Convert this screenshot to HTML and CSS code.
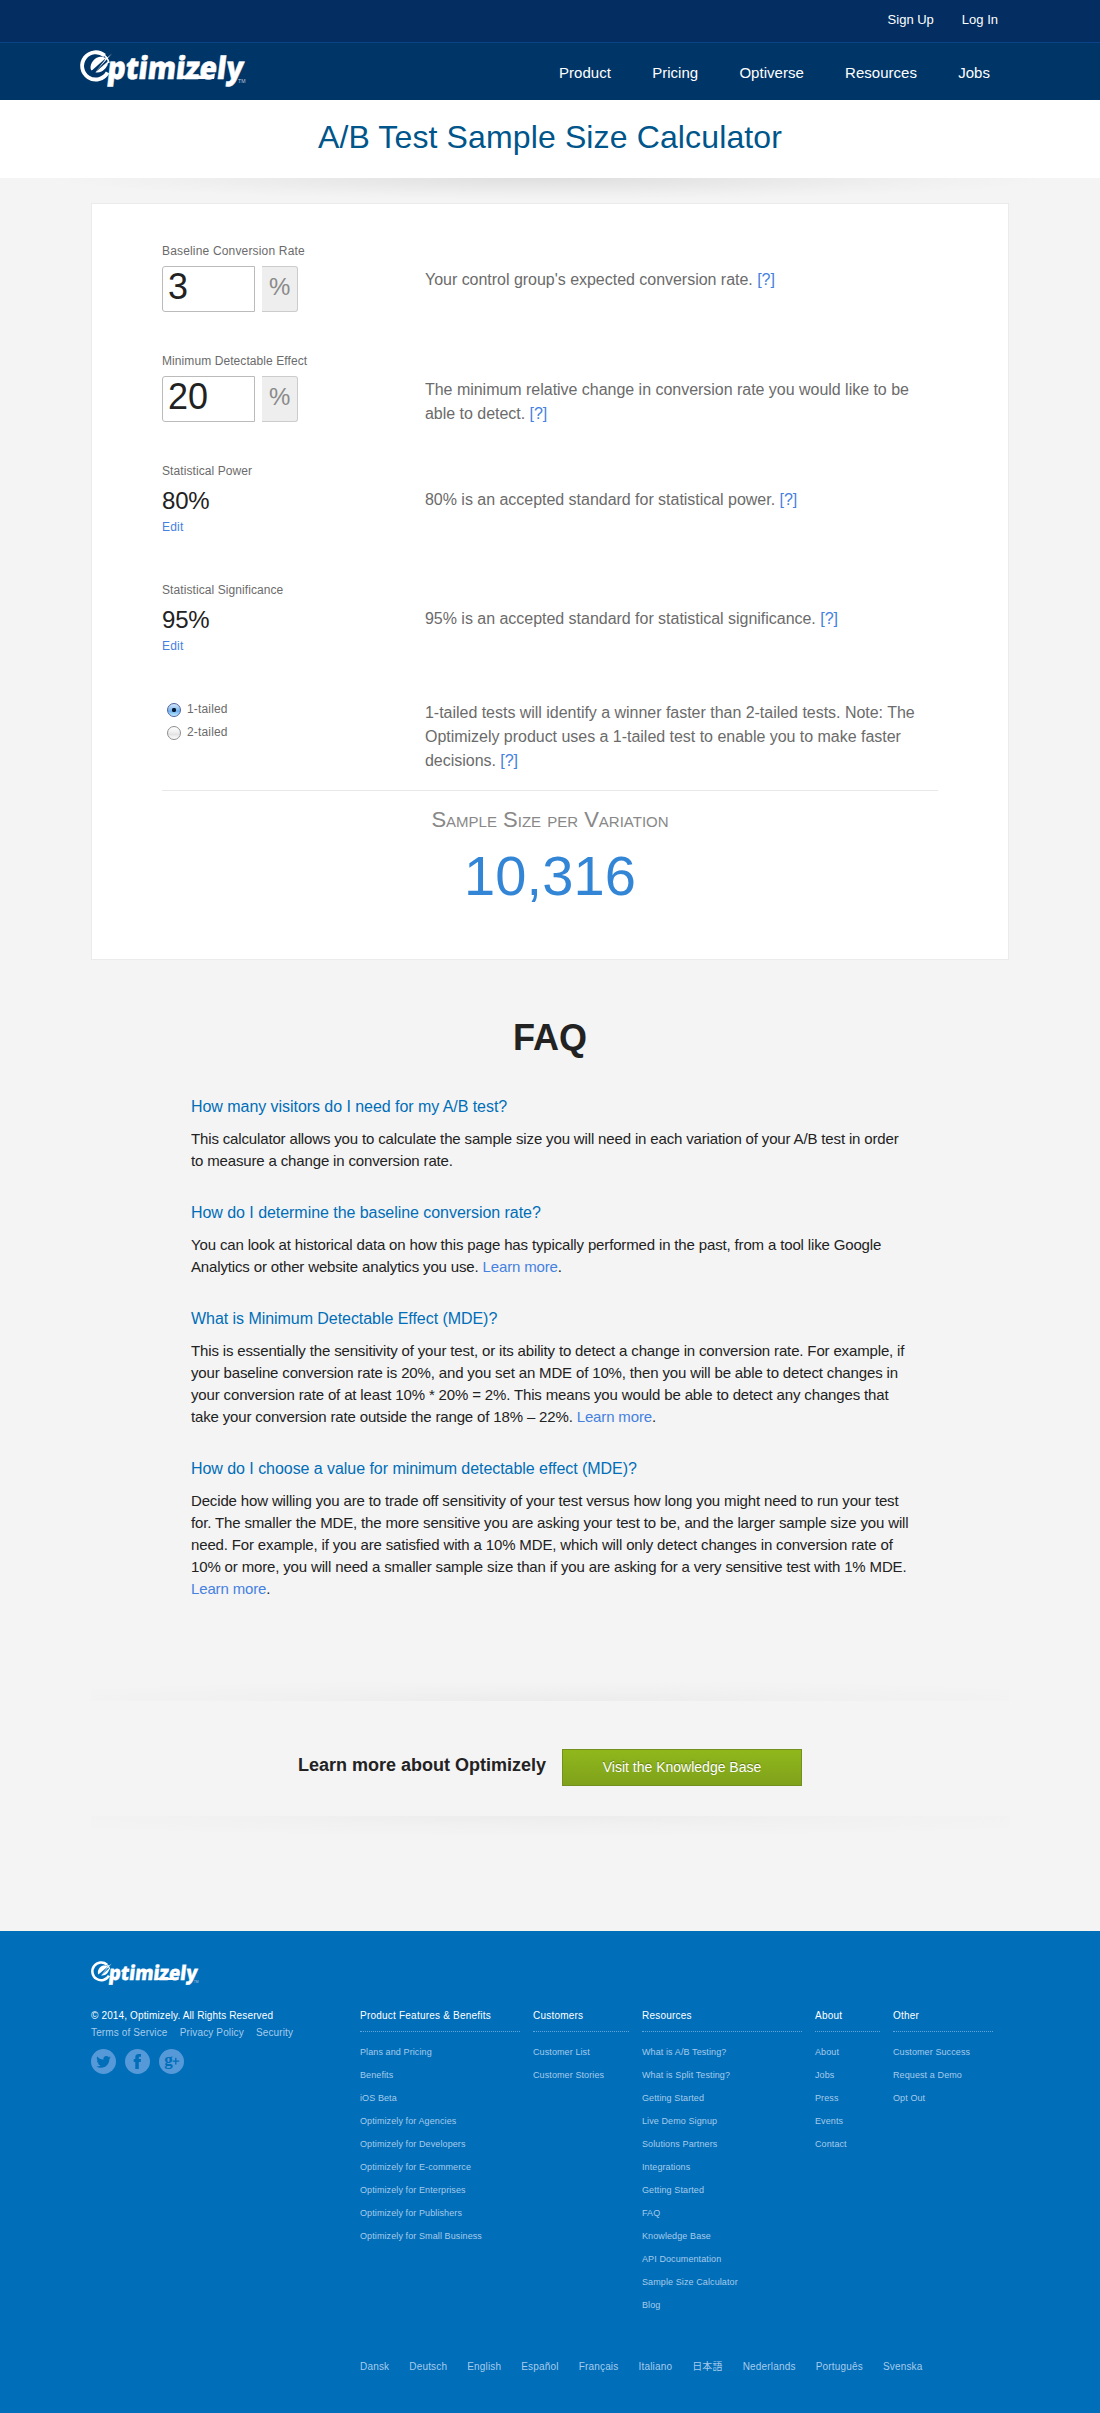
FILE: index.html
```
<!DOCTYPE html>
<html lang="en">
<head>
<meta charset="utf-8">
<title>A/B Test Sample Size Calculator</title>
<link rel="stylesheet" href="styles.css">
</head>
<body>
<header>
  <div class="topbar">
    <nav class="account"><a>Sign Up</a><a>Log In</a></nav>
  </div>
  <div class="mainbar">
    <svg class="logo" viewBox="0 0 166 36">
      <path d="M24.6 5.6A13.6 13.6 0 1 0 27.6 22.5" fill="none" stroke="#fff" stroke-width="3.9"/>
      <path d="M22 3.6A14 14 0 0 1 29 13" fill="none" stroke="#fff" stroke-width="1.6"/>
      <path d="M11.2 20.6C8.8 15.4 13 8.6 18.8 7C22 6.2 24.6 7 25.4 8.6L13.2 19.2Z" fill="#fff"/>
      <path d="M15.6 21.8L32 3.6L27.4 7.4L26 6.2L24.6 10.2Z" fill="#fff"/>
      <path d="M15.4 22.2L28 11.2C28.6 17 22 23.6 15.4 22.2Z" fill="#fff"/>
      <text transform="translate(26.4 28.6) skewX(-7)" class="logo-word" textLength="136" lengthAdjust="spacingAndGlyphs">ptimizely</text>
      <path d="M99 25.6H134V29H98.5Z" fill="#fff"/>
      <text x="158" y="33" class="logo-tm" textLength="7.5" lengthAdjust="spacingAndGlyphs">TM</text>
    </svg>
    <nav class="menu"><a>Product</a><a>Pricing</a><a>Optiverse</a><a>Resources</a><a>Jobs</a></nav>
  </div>
</header>

<div class="title"><h1>A/B Test Sample Size Calculator</h1></div>
<div class="title-shadow"></div>

<main>
  <form class="card">
    <div class="row">
      <div class="field">
        <label class="loose">Baseline Conversion Rate</label>
        <div class="percent"><input type="text" value="3"><span>%</span></div>
      </div>
      <p>Your control group's expected conversion rate. <a>[?]</a></p>
    </div>
    <div class="row">
      <div class="field">
        <label>Minimum Detectable Effect</label>
        <div class="percent"><input type="text" value="20"><span>%</span></div>
      </div>
      <p>The minimum relative change in conversion rate you would like to be able to detect. <a>[?]</a></p>
    </div>
    <div class="row tall">
      <div class="field">
        <label>Statistical Power</label>
        <div class="value">80%</div>
        <a class="edit">Edit</a>
      </div>
      <p>80% is an accepted standard for statistical power. <a>[?]</a></p>
    </div>
    <div class="row tall">
      <div class="field">
        <label>Statistical Significance</label>
        <div class="value">95%</div>
        <a class="edit">Edit</a>
      </div>
      <p>95% is an accepted standard for statistical significance. <a>[?]</a></p>
    </div>
    <div class="row tails">
      <div class="field radios">
        <label><input type="radio" name="tails" checked>1-tailed</label>
        <label><input type="radio" name="tails">2-tailed</label>
      </div>
      <p>1-tailed tests will identify a winner faster than 2-tailed tests. Note: The Optimizely product uses a 1-tailed test to enable you to make faster decisions. <a>[?]</a></p>
    </div>
    <div class="result">
      <div class="result-label">Sample Size per Variation</div>
      <div class="result-value">10,316</div>
    </div>
  </form>

  <section class="faq">
    <h2>FAQ</h2>
    <h3>How many visitors do I need for my A/B test?</h3>
    <p>This calculator allows you to calculate the sample size you will need in each variation of your A/B test in order<br>to measure a change in conversion rate.</p>
    <h3>How do I determine the baseline conversion rate?</h3>
    <p>You can look at historical data on how this page has typically performed in the past, from a tool like Google<br>Analytics or other website analytics you use. <a>Learn more</a>.</p>
    <h3>What is Minimum Detectable Effect (MDE)?</h3>
    <p>This is essentially the sensitivity of your test, or its ability to detect a change in conversion rate. For example, if<br>your baseline conversion rate is 20%, and you set an MDE of 10%, then you will be able to detect changes in<br>your conversion rate of at least 10% * 20% = 2%. This means you would be able to detect any changes that<br>take your conversion rate outside the range of 18% – 22%. <a>Learn more</a>.</p>
    <h3>How do I choose a value for minimum detectable effect (MDE)?</h3>
    <p>Decide how willing you are to trade off sensitivity of your test versus how long you might need to run your test<br>for. The smaller the MDE, the more sensitive you are asking your test to be, and the larger sample size you will<br>need. For example, if you are satisfied with a 10% MDE, which will only detect changes in conversion rate of<br>10% or more, you will need a smaller sample size than if you are asking for a very sensitive test with 1% MDE.<br><a>Learn more</a>.</p>
  </section>

  <section class="more">
    <div class="shade upper"></div>
    <div class="cta"><strong>Learn more about Optimizely</strong><a class="button">Visit the Knowledge Base</a></div>
    <div class="shade lower"></div>
  </section>
</main>

<footer>
  <svg class="footer-logo" viewBox="0 0 166 36">
    <path d="M24.6 5.6A13.6 13.6 0 1 0 27.6 22.5" fill="none" stroke="#fff" stroke-width="3.9"/>
    <path d="M22 3.6A14 14 0 0 1 29 13" fill="none" stroke="#fff" stroke-width="1.6"/>
    <path d="M11.2 20.6C8.8 15.4 13 8.6 18.8 7C22 6.2 24.6 7 25.4 8.6L13.2 19.2Z" fill="#fff"/>
    <path d="M15.6 21.8L32 3.6L27.4 7.4L26 6.2L24.6 10.2Z" fill="#fff"/>
    <path d="M15.4 22.2L28 11.2C28.6 17 22 23.6 15.4 22.2Z" fill="#fff"/>
    <text transform="translate(26.4 28.6) skewX(-7)" class="logo-word" textLength="136" lengthAdjust="spacingAndGlyphs">ptimizely</text>
    <path d="M99 25.6H134V29H98.5Z" fill="#fff"/>
    <text x="158" y="33" class="logo-tm" textLength="7.5" lengthAdjust="spacingAndGlyphs">TM</text>
  </svg>
  <div class="footer-body">
    <div class="legal">
      <div class="copyright">© 2014, Optimizely. All Rights Reserved</div>
      <div class="terms"><a>Terms of Service</a><a>Privacy Policy</a><a>Security</a></div>
      <div class="social">
        <svg viewBox="0 0 25 25"><circle cx="12.5" cy="12.5" r="12.5"/><path transform="translate(5.2 5.6) scale(.61)" d="M23.953 4.57a10 10 0 01-2.825.775 4.958 4.958 0 002.163-2.723c-.951.555-2.005.959-3.127 1.184a4.92 4.92 0 00-8.384 4.482C7.69 8.095 4.067 6.13 1.64 3.162a4.822 4.822 0 00-.666 2.475c0 1.71.87 3.213 2.188 4.096a4.904 4.904 0 01-2.228-.616v.06a4.923 4.923 0 003.946 4.827 4.996 4.996 0 01-2.212.085 4.936 4.936 0 004.604 3.417 9.867 9.867 0 01-6.102 2.105c-.39 0-.779-.023-1.17-.067a13.995 13.995 0 007.557 2.209c9.053 0 13.998-7.496 13.998-13.985 0-.21 0-.42-.015-.63A9.935 9.935 0 0024 4.59z"/></svg>
        <svg viewBox="0 0 25 25"><circle cx="12.5" cy="12.5" r="12.5"/><path d="M10.3 20V13H8.7V10H10.3V8.2C10.3 6 11.5 4.9 13.7 4.9H16V7.7H14.7C14 7.7 13.8 8 13.8 8.6V10H16L15.7 13H13.8V20Z"/></svg>
        <svg viewBox="0 0 25 25"><circle cx="12.5" cy="12.5" r="12.5"/><text x="5.2" y="16" class="g">g</text><path d="M16.8 8.8V15.4M13.6 12.1H20.2" class="plus"/></svg>
      </div>
    </div>
    <div class="links">
      <div class="column wide">
        <h4>Product Features &amp; Benefits</h4>
        <a>Plans and Pricing</a><a>Benefits</a><a>iOS Beta</a><a>Optimizely for Agencies</a><a>Optimizely for Developers</a><a>Optimizely for E-commerce</a><a>Optimizely for Enterprises</a><a>Optimizely for Publishers</a><a>Optimizely for Small Business</a>
      </div>
      <div class="column customers">
        <h4>Customers</h4>
        <a>Customer List</a><a>Customer Stories</a>
      </div>
      <div class="column wide">
        <h4>Resources</h4>
        <a>What is A/B Testing?</a><a>What is Split Testing?</a><a>Getting Started</a><a>Live Demo Signup</a><a>Solutions Partners</a><a>Integrations</a><a>Getting Started</a><a>FAQ</a><a>Knowledge Base</a><a>API Documentation</a><a>Sample Size Calculator</a><a>Blog</a>
      </div>
      <div class="column about">
        <h4>About</h4>
        <a>About</a><a>Jobs</a><a>Press</a><a>Events</a><a>Contact</a>
      </div>
      <div class="column other">
        <h4>Other</h4>
        <a>Customer Success</a><a>Request a Demo</a><a>Opt Out</a>
      </div>
    </div>
  </div>
  <div class="languages"><a>Dansk</a><a>Deutsch</a><a>English</a><a>Español</a><a>Français</a><a>Italiano</a><a lang="ja">日本語</a><a>Nederlands</a><a>Português</a><a>Svenska</a></div>
</footer>
</body>
</html>
```
FILE: styles.css
```
* { box-sizing: border-box; }

body {
  margin: 0;
  background: #f4f4f4;
  color: #222;
  font-family: "Liberation Sans", Arial, "Noto Sans CJK JP", sans-serif;
}

h1, h2, h3, h4, p { margin: 0; font-weight: normal; }

a { color: #4581e0; text-decoration: none; }

.logo-word {
  font: 800 31px "Open Sans", sans-serif;
  fill: #fff;
  stroke: #fff;
  stroke-width: .5;
}

.logo-tm { font: 5.5px "Liberation Sans", sans-serif; fill: #b9c8da; }

/* Header */
.topbar {
  height: 43px;
  background: #042e61;
  border-bottom: 1px solid #0a4488;
}

.account {
  display: flex;
  justify-content: flex-end;
  gap: 28px;
  padding: 12px 102px 0 0;
  font-size: 13px;
  line-height: 16px;
}

.account a, .menu a { color: #fff; }

.mainbar {
  display: flex;
  justify-content: space-between;
  height: 57px;
  padding: 7px 110px 0 80px;
  background: #003567;
}

.logo { width: 166px; height: 36px; overflow: visible; }

.menu {
  display: flex;
  gap: 41.2px;
  padding-top: 13px;
  font-size: 15px;
  line-height: 20px;
  letter-spacing: .03px;
}

.title {
  height: 78px;
  padding-top: 18px;
  background: #fff;
  text-align: center;
}

.title h1 {
  color: #00558a;
  font-size: 32px;
  line-height: 38px;
  letter-spacing: .13px;
}

.title-shadow {
  height: 25px;
  background: radial-gradient(ellipse 500px 22px at 50% 0, #dfdfdf, #e8e8e8 40%, #f0f0f0 75%, #f4f4f4);
}

/* Calculator */
.card {
  width: 918px;
  height: 757px;
  margin: 0 auto;
  padding: 39px 70px 0;
  background: #fff;
  border: 1px solid #ebebeb;
}

.row { display: flex; height: 110px; }
.row.tall { height: 119px; }
.row.tails { height: 89px; }

.field { width: 263px; }

.field label {
  display: block;
  color: #6b6b6b;
  font-size: 12px;
  line-height: 16px;
  letter-spacing: .08px;
}

.field .loose { letter-spacing: .17px; }

.row p {
  width: 500px;
  padding-top: 25px;
  color: #6b6b6b;
  font-size: 16px;
  line-height: 24px;
  letter-spacing: -.025px;
}

.row.tails p { padding-top: 0; }

.percent { display: flex; gap: 7px; margin-top: 7px; }

.percent input {
  width: 93px;
  height: 46px;
  padding: 0 5px 4px;
  border: 1px solid #bbb;
  border-radius: 3px 0 0 3px;
  background: #fff;
  color: #222;
  font: 36px "Liberation Sans", sans-serif;
}

.percent span {
  width: 36px;
  height: 46px;
  padding-left: 7px;
  border: 1px solid #ccc;
  border-left: 0;
  border-radius: 0 3px 3px 0;
  background: #eee;
  color: #8a8a8a;
  font-size: 24px;
  line-height: 39px;
}

.value {
  margin-top: 7px;
  color: #222;
  font-size: 24px;
  line-height: 29px;
  letter-spacing: -.2px;
}

.edit { display: block; margin-top: 4px; font-size: 12px; line-height: 16px; letter-spacing: .2px; }

.radios { display: flex; flex-direction: column; gap: 7px; }
.radios label { display: flex; gap: 6px; padding-left: 5px; letter-spacing: .17px; }

.radios input {
  appearance: none;
  width: 14px;
  height: 14px;
  margin: 2px 0 0;
  border: 1px solid #8e8e8e;
  border-radius: 50%;
  background: linear-gradient(#fff, #ececec 50%, #e2e2e2 60%, #fff);
}

.radios input:checked {
  border-color: #50619f;
  background: radial-gradient(circle, #061a33 0 1.8px, transparent 2.5px), linear-gradient(#d5e8fa, #84b9ec 50%, #6dafed 60%, #c4f0ff);
}

.result {
  padding-top: 16px;
  border-top: 1px solid #e8e8e8;
  text-align: center;
}

.result-label {
  color: #888;
  font-size: 22px;
  font-variant: small-caps;
  line-height: 26px;
}

.result-value {
  margin-top: 11px;
  color: #3385d6;
  font-size: 56px;
  line-height: 64px;
  letter-spacing: .15px;
}

/* FAQ */
.faq { width: 740px; margin: 0 auto; padding: 57px 0 80px 11px; }

.faq h2 {
  margin: 0 11px 38px 0;
  font-size: 36px;
  font-weight: bold;
  line-height: 42px;
  text-align: center;
}

.faq h3 {
  margin-bottom: 11px;
  color: #006eb8;
  font-size: 16px;
  line-height: 20px;
  letter-spacing: -.05px;
}

.faq p {
  margin-bottom: 31px;
  font-size: 15px;
  line-height: 22px;
  letter-spacing: -.15px;
  white-space: nowrap;
}

.faq p:last-child { margin-bottom: 0; }

.more { width: 918px; height: 251px; margin: 0 auto; }

.shade { height: 21px; }
.upper { background: radial-gradient(ellipse 620px 21px at 50% 100%, #ececec, #f1f1f1 50%, #f4f4f4); }
.lower { background: radial-gradient(ellipse 620px 21px at 50% 0, #ececec, #f1f1f1 50%, #f4f4f4); }

.cta {
  display: flex;
  justify-content: center;
  gap: 16px;
  height: 115px;
  padding-top: 48px;
}

.cta strong { font-size: 18px; line-height: 32px; }

.button {
  width: 240px;
  height: 37px;
  border: 1px solid #73901f;
  background: linear-gradient(#90b81c, #7fa11b);
  color: #fff;
  font-size: 14px;
  line-height: 34px;
  text-align: center;
  text-shadow: 0 -1px 1px rgba(0, 0, 0, .3);
}

/* Footer */
footer {
  height: 482px;
  padding: 30px 91px 0;
  background: #006eb8;
}

footer a { color: #a6cbec; }

.footer-logo { display: block; width: 108px; height: 23.5px; overflow: visible; }

.footer-body { display: flex; margin-top: 22.5px; }

.legal { width: 269px; font-size: 10px; line-height: 17px; letter-spacing: .13px; }
.copyright { color: #fff; letter-spacing: .14px; }
.terms { display: flex; gap: 12.2px; }

.social { display: flex; gap: 9px; margin-top: 8px; }
.social svg { width: 25px; height: 25px; }
.social circle { fill: #5599d8; }
.social path, .g { fill: #006eb8; }
.social .plus { fill: none; stroke: #006eb8; stroke-width: 1.3; }
.g { font: bold 17px "Liberation Serif", serif; }

.links { display: flex; gap: 13px; height: 310px; padding-top: 3px; }

.column { display: flex; flex-direction: column; }
.wide { width: 160px; }
.customers { width: 96px; }
.about { width: 65px; }
.other { width: 100px; }

.column h4 {
  height: 22px;
  margin-bottom: 9px;
  border-bottom: 1px dotted #5fa5db;
  color: #fff;
  font-size: 10px;
  line-height: 12px;
  letter-spacing: .22px;
  white-space: nowrap;
}

.column a { font-size: 9px; line-height: 23px; letter-spacing: .1px; white-space: nowrap; }

.languages {
  display: flex;
  gap: 20px;
  margin: 44px 0 0 269px;
  font-size: 10px;
  line-height: 12px;
  letter-spacing: .18px;
}
```
